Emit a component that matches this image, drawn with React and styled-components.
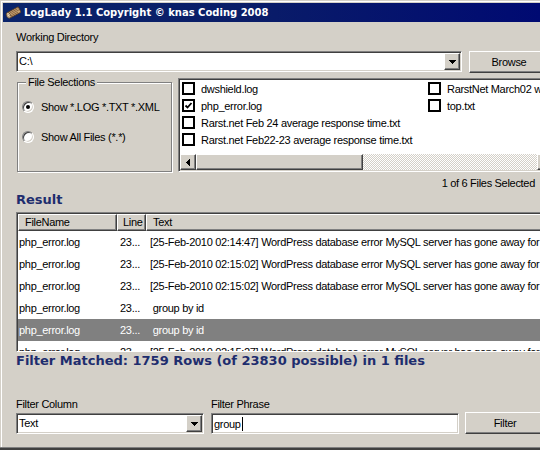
import React from 'react';
import styled, { createGlobalStyle } from 'styled-components';

const GlobalStyle = createGlobalStyle`
  html, body {
    margin: 0;
    padding: 0;
    background: #d4d0c8;
    overflow: hidden;
  }
  body {
    font-family: "Liberation Sans", Arial, sans-serif;
    font-size: 11px;
    letter-spacing: -0.3px;
    color: #000;
  }
`;

const sunken = `
  border: 1px solid;
  border-color: #808080 #ffffff #ffffff #808080;
  box-shadow: inset 1px 1px #404040, inset -1px -1px #d4d0c8;
  padding: 1px;
`;

const raised = `
  border: 1px solid;
  border-color: #ffffff #404040 #404040 #ffffff;
  box-shadow: inset -1px -1px #808080, inset 1px 1px #d4d0c8;
  background: #d4d0c8;
`;

const Window = styled.div`
  width: 540px;
  height: 450px;
  box-sizing: border-box;
  padding: 3px 0 0 3px;
  box-shadow: inset 0 -2px #404040, inset 0 -3px #808080, inset 1px 1px #d4d0c8, inset 2px 2px #ffffff;
  display: flex;
  flex-direction: column;
  overflow: hidden;
`;

const TitleBar = styled.div`
  height: 19px;
  flex-shrink: 0;
  display: flex;
  align-items: center;
  gap: 3px;
  padding-left: 2px;
  background: linear-gradient(90deg, #0a246a 0%, #0a1d68 45%, #000a72 100%);
  color: #fff;
  font: bold 10px "DejaVu Sans", Verdana, sans-serif;
  letter-spacing: 0;
  white-space: nowrap;
`;

const Body = styled.div`
  padding-left: 13px;
  display: flex;
  flex-direction: column;
`;

const Label = styled.div`
  line-height: 13px;
  margin-top: ${({ $top }) => $top || 0}px;
  white-space: nowrap;
`;

const Row = styled.div`
  display: flex;
  align-items: ${({ $align }) => $align || 'flex-start'};
  margin-top: ${({ $top }) => $top || 0}px;
`;

const Combo = styled.div`
  ${sunken}
  width: ${({ $w }) => $w}px;
  height: 21px;
  box-sizing: border-box;
  flex-shrink: 0;
  background: #fff;
  display: flex;
  align-items: center;
`;

const ComboText = styled.div`
  flex: 1;
  padding-left: 1px;
  line-height: 17px;
  white-space: nowrap;
  display: flex;
  align-items: center;
`;

const DropButton = styled.div`
  ${raised}
  width: 16px;
  height: 17px;
  box-sizing: border-box;
  display: flex;
  align-items: center;
  justify-content: center;
`;

const Button = styled.div`
  ${raised}
  width: 80px;
  height: 22px;
  box-sizing: border-box;
  flex-shrink: 0;
  margin-left: ${({ $left }) => $left}px;
  display: flex;
  align-items: center;
  justify-content: center;
  align-self: ${({ $end }) => ($end ? 'flex-end' : 'auto')};
`;

const GroupBox = styled.fieldset`
  margin: 0 0 0 1px;
  padding: 0;
  width: 155px;
  height: 94px;
  box-sizing: border-box;
  flex-shrink: 0;
  border: 1px solid #808080;
  box-shadow: inset 1px 1px #fff, 1px 1px #fff;
`;

const Legend = styled.legend`
  margin-left: 8px;
  padding: 0 2px;
  line-height: 9px;
  background: #d4d0c8;
`;

const RadioRow = styled.div`
  display: flex;
  align-items: center;
  gap: 7px;
  height: 14px;
  margin: ${({ $top }) => $top}px 0 0 4px;
  white-space: nowrap;
`;

const Radio = styled.span`
  width: 12px;
  height: 12px;
  box-sizing: border-box;
  border-radius: 50%;
  border: 1px solid;
  border-color: #808080 #ffffff #ffffff #808080;
  box-shadow: inset 1px 1px #404040, inset -1px -1px #d4d0c8;
  background: #fff;
  display: flex;
  align-items: center;
  justify-content: center;
  flex-shrink: 0;
  &::after {
    content: '';
    width: 4px;
    height: 4px;
    border-radius: 50%;
    background: ${({ $on }) => ($on ? '#000' : 'transparent')};
  }
`;

const ListBox = styled.div`
  ${sunken}
  margin-left: 6px;
  width: 377px;
  height: 94px;
  box-sizing: border-box;
  flex-shrink: 0;
  background: #fff;
  display: flex;
  flex-direction: column;
`;

const Columns = styled.div`
  flex: 1;
  display: flex;
  overflow: hidden;
`;

const Column = styled.div`
  width: 246px;
  flex-shrink: 0;
`;

const FileItem = styled.div`
  height: 17px;
  display: flex;
  align-items: center;
  gap: 6px;
  padding-left: 2px;
  white-space: nowrap;
`;

const Check = styled.span`
  width: 13px;
  height: 13px;
  box-sizing: border-box;
  border: 2px solid #000;
  flex-shrink: 0;
  display: flex;
  align-items: center;
  justify-content: center;
`;

const ScrollBar = styled.div`
  height: 16px;
  display: flex;
  flex-shrink: 0;
`;

const ScrollButton = styled.div`
  ${raised}
  width: 16px;
  height: 16px;
  box-sizing: border-box;
  flex-shrink: 0;
  display: flex;
  align-items: center;
  justify-content: center;
`;

const Thumb = styled.div`
  ${raised}
  width: ${({ $w }) => $w}px;
  height: 16px;
  box-sizing: border-box;
  flex-shrink: 0;
`;

const Track = styled.div`
  flex: 1;
  background: repeating-conic-gradient(#ffffff 0 25%, #d4d0c8 0 50%) 0 0 / 2px 2px;
`;

const Status = styled.div`
  margin-top: 5px;
  line-height: 13px;
  text-align: right;
  padding-right: 5px;
`;

const Heading = styled.div`
  font: bold 13px/16px "DejaVu Sans", Verdana, sans-serif;
  letter-spacing: 0;
  color: #1e2d6e;
  margin-top: ${({ $top }) => $top}px;
  white-space: nowrap;
`;

const ListView = styled.div`
  ${sunken}
  margin-top: 4px;
  width: 545px;
  height: 140px;
  box-sizing: border-box;
  flex-shrink: 0;
  background: #fff;
  overflow: hidden;
`;

const HeaderRow = styled.div`
  display: flex;
  height: 17px;
`;

const HeaderCell = styled.div`
  ${raised}
  width: ${({ $w }) => ($w ? `${$w}px` : 'auto')};
  flex: ${({ $w }) => ($w ? '0 0 auto' : '1')};
  box-sizing: border-box;
  padding-left: ${({ $pad }) => $pad}px;
  line-height: 15px;
  white-space: nowrap;
`;

const DataRow = styled.div`
  display: flex;
  height: 22px;
  align-items: center;
  background: ${({ $sel }) => ($sel ? '#808080' : '#fff')};
  color: ${({ $sel }) => ($sel ? '#fff' : '#000')};
`;

const Cell = styled.div`
  width: ${({ $w }) => ($w ? `${$w}px` : 'auto')};
  flex: ${({ $w }) => ($w ? '0 0 auto' : '1')};
  box-sizing: border-box;
  padding-left: ${({ $pad }) => $pad}px;
  white-space: pre;
  overflow: hidden;
`;

const FilterCol = styled.div`
  display: flex;
  flex-direction: column;
  margin-left: ${({ $left }) => $left || 0}px;
`;

const TextBox = styled.div`
  ${sunken}
  width: 248px;
  height: 21px;
  box-sizing: border-box;
  margin-top: 2px;
  background: #fff;
  display: flex;
  align-items: center;
  padding-left: 2px;
`;

const Caret = styled.span`
  width: 1px;
  height: 14px;
  background: #000;
  margin-left: 1px;
`;

const DownArrow = () => (
  <svg width="7" height="4" viewBox="0 0 7 4" shapeRendering="crispEdges">
    <path d="M0 0h7v1h-1v1h-1v1h-1v1h-1v-1h-1v-1h-1v-1h-1z" fill="#000" />
  </svg>
);

const SideArrow = ({ dir }) => (
  <svg width="4" height="7" viewBox="0 0 4 7" shapeRendering="crispEdges">
    {dir === 'left' ? (
      <path d="M3 0h1v7h-1v-1h-1v-1h-1v-1h-1v-1h1v-1h1v-1h1z" fill="#000" />
    ) : (
      <path d="M0 0h1v1h1v1h1v1h1v1h-1v1h-1v1h-1v1h-1z" fill="#000" />
    )}
  </svg>
);

const LogIcon = () => (
  <svg width="16" height="16" viewBox="0 0 16 16">
    <g transform="rotate(-28 8 8)">
      <rect x="3" y="5" width="12.5" height="6" fill="#c9a77a" stroke="#5a3a1e" strokeWidth="0.8" />
      <path d="M5 6.5h9M6 8h9M5 9.6h8" stroke="#7a5430" strokeWidth="0.7" />
      <ellipse cx="3" cy="8" rx="2" ry="3" fill="#f0e2c4" stroke="#5a3a1e" strokeWidth="0.8" />
      <ellipse cx="3" cy="8" rx="0.9" ry="1.4" fill="none" stroke="#a07850" strokeWidth="0.6" />
    </g>
  </svg>
);

const CheckMark = () => (
  <svg width="9" height="9" viewBox="0 0 9 9">
    <path d="M1.5 4.5l2 2 4-4.5" fill="none" stroke="#000" strokeWidth="1.8" />
  </svg>
);

const fileColumns = [
  [
    { name: 'dwshield.log' },
    { name: 'php_error.log', checked: true },
    { name: 'Rarst.net Feb 24 average response time.txt' },
    { name: 'Rarst.net Feb22-23 average response time.txt' },
  ],
  [{ name: 'RarstNet March02 wp response time.txt' }, { name: 'top.txt' }],
];

const ERR = 'WordPress database error MySQL server has gone away for query SELECT';
const rows = [
  { text: `[25-Feb-2010 02:14:47] ${ERR}` },
  { text: `[25-Feb-2010 02:15:02] ${ERR}` },
  { text: `[25-Feb-2010 02:15:02] ${ERR}` },
  { text: ' group by id' },
  { text: ' group by id', sel: true },
  { text: `[25-Feb-2010 02:15:27] ${ERR}` },
];

export default function App() {
  return (
    <>
      <GlobalStyle />
      <Window>
        <TitleBar>
          <LogIcon />
          LogLady 1.1 Copyright © knas Coding 2008
        </TitleBar>
        <Body>
          <Label $top={9}>Working Directory</Label>
          <Row $top={7}>
            <Combo $w={446}>
              <ComboText>C:\</ComboText>
              <DropButton>
                <DownArrow />
              </DropButton>
            </Combo>
            <Button $left={7}>Browse</Button>
          </Row>

          <Row $top={5}>
            <GroupBox>
              <Legend>File Selections</Legend>
              <RadioRow $top={13}>
                <Radio $on />
                Show *.LOG *.TXT *.XML
              </RadioRow>
              <RadioRow $top={16}>
                <Radio />
                Show All Files (*.*)
              </RadioRow>
            </GroupBox>
            <ListBox>
              <Columns>
                {fileColumns.map((col, i) => (
                  <Column key={i}>
                    {col.map((f) => (
                      <FileItem key={f.name}>
                        <Check>{f.checked && <CheckMark />}</Check>
                        {f.name}
                      </FileItem>
                    ))}
                  </Column>
                ))}
              </Columns>
              <ScrollBar>
                <ScrollButton>
                  <SideArrow dir="left" />
                </ScrollButton>
                <Thumb $w={167} />
                <Track />
                <ScrollButton>
                  <SideArrow dir="right" />
                </ScrollButton>
              </ScrollBar>
            </ListBox>
          </Row>

          <Status>1 of 6 Files Selected</Status>
          <Heading $top={2}>Result</Heading>

          <ListView>
            <HeaderRow>
              <HeaderCell $w={99} $pad={6}>FileName</HeaderCell>
              <HeaderCell $w={29} $pad={5}>Line</HeaderCell>
              <HeaderCell $pad={6}>Text</HeaderCell>
            </HeaderRow>
            {rows.map((r, i) => (
              <DataRow key={i} $sel={r.sel}>
                <Cell $w={99} $pad={1}>php_error.log</Cell>
                <Cell $w={29} $pad={3}>23...</Cell>
                <Cell $pad={4}>{r.text}</Cell>
              </DataRow>
            ))}
          </ListView>

          <Heading $top={1}>Filter Matched: 1759 Rows (of 23830 possible) in 1 files</Heading>

          <Row $top={29}>
            <FilterCol>
              <Label>Filter Column</Label>
              <Combo $w={188} style={{ marginTop: 2 }}>
                <ComboText>Text</ComboText>
                <DropButton>
                  <DownArrow />
                </DropButton>
              </Combo>
            </FilterCol>
            <FilterCol $left={7}>
              <Label>Filter Phrase</Label>
              <TextBox>
                group
                <Caret />
              </TextBox>
            </FilterCol>
            <Button $left={6} $end>
              Filter
            </Button>
          </Row>
        </Body>
      </Window>
    </>
  );
}
